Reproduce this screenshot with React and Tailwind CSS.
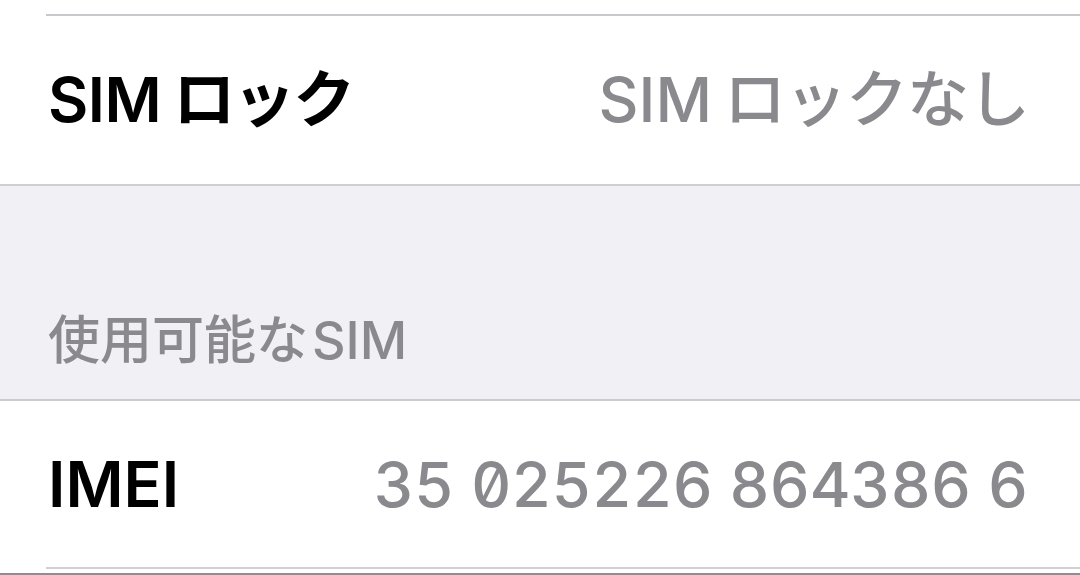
export default function App() {
  const font = { fontFamily: 'Inter, "Noto Sans CJK JP", sans-serif' };
  return (
    <div className="w-[1080px] h-[575px] bg-white overflow-hidden" style={font}>
      <div className="h-[14px]" />
      <div className="ml-[46px] h-[2px] bg-[#c8c8cc]" />
      <div className="h-[168px] flex items-center justify-between pl-[48px] pr-[51px]">
        <span className="text-[62px] leading-none font-semibold text-black flex items-center">
          <span className="tracking-[-0.5px]">SIM</span>
          <span className="ml-[12px] tracking-[-2px]">ロック</span>
        </span>
        <span className="text-[62px] leading-none font-medium text-[#8a8a8e] flex items-center">
          <span>SIM</span>
          <span className="ml-[12px] tracking-[-1px]">ロックなし</span>
        </span>
      </div>
      <div className="h-[2px] bg-[#cfcfd3]" />
      <div className="h-[213px] bg-[#f0f0f5] pl-[48px] pt-[125px]">
        <div className="h-[60px] flex items-center text-[52px] leading-none font-medium text-[#8a8a8e]">
          <span>使用可能な</span>
          <span className="ml-[4px]">SIM</span>
        </div>
      </div>
      <div className="h-[2px] bg-[#cbcbcf]" />
      <div className="h-[166px] flex items-center justify-between pl-[48px] pr-[52px]">
        <span className="text-[63px] leading-none font-semibold text-black">IMEI</span>
        <span className="text-[62.5px] leading-none font-medium text-[#8a8a8e] tracking-[-0.2px] [font-feature-settings:'tnum','zero']">35 025226 864386 6</span>
      </div>
      <div className="ml-[46px] h-[2px] bg-[#d0d0d4]" />
      <div className="h-[4px]" />
      <div className="h-[2px] bg-[#8e8e90]" />
    </div>
  );
}
